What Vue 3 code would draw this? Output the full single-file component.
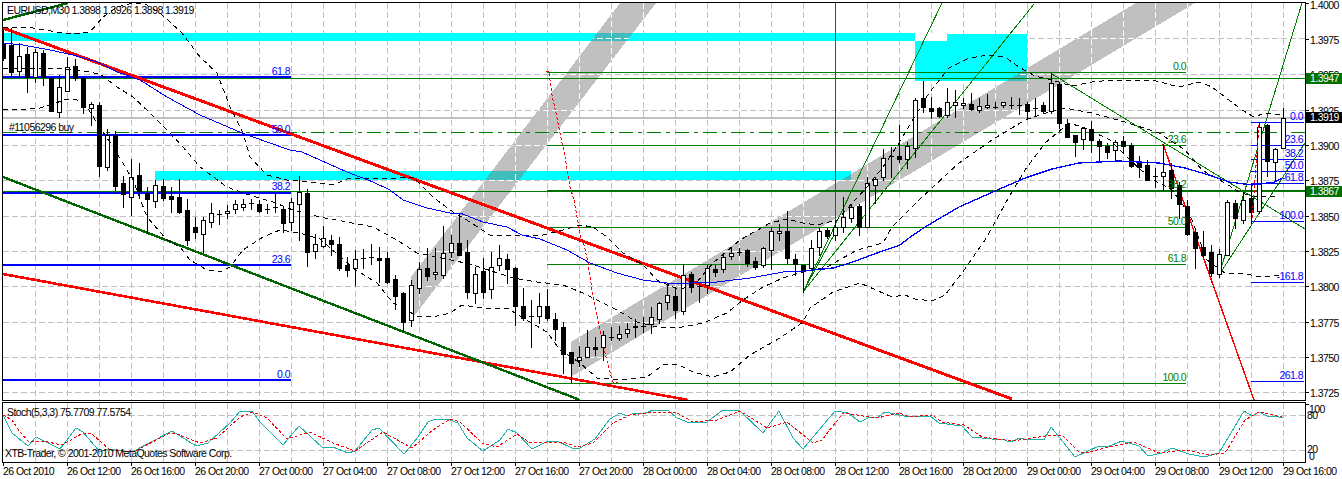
<template>
  <div class="terminal">
    <svg class="chart" width="1342" height="479" viewBox="0 0 1342 479">
      <defs>
        <clipPath id="main-clip"><rect x="3" y="3" width="1302" height="397" /></clipPath>
        <clipPath id="band-clip">
          <polygon v-for="b in bands" :key="b" :points="b" />
        </clipPath>
        <clipPath id="cyan-clip">
          <rect v-for="r in cyanRects" :key="r.x" :x="r.x" :y="r.y" :width="r.w" :height="r.h" />
        </clipPath>
      </defs>

      <!-- grid -->
      <line v-for="y in gridY" :key="'gy' + y" class="grid" x1="3" x2="1305" :y1="y" :y2="y" />
      <line v-for="y in [415.5, 450.5]" :key="'sy' + y" class="grid" x1="3" x2="1305" :y1="y" :y2="y" />
      <line v-for="x in gridX" :key="'gx' + x" class="grid" :x1="x" :x2="x" y1="3" y2="400" />
      <line v-for="x in gridX" :key="'sx' + x" class="grid" :x1="x" :x2="x" y1="403" y2="462" />

      <g clip-path="url(#main-clip)">
        <!-- objects behind the bars -->
        <polygon v-for="b in bands" :key="b" class="band" :points="b" />
        <rect v-for="r in cyanRects" :key="r.x" class="cyan" :x="r.x" :y="r.y" :width="r.w" :height="r.h" />
        <rect class="blank" x="915" y="33" width="32" height="8" />
        <g clip-path="url(#cyan-clip)">
          <polygon v-for="b in bands" :key="b" class="teal" :points="b" />
        </g>
        <g clip-path="url(#band-clip)">
          <line v-for="x in gridX" :key="x" class="grid-xor" :x1="x" :x2="x" y1="3" y2="400" />
          <line v-for="y in gridY" :key="y" class="grid-xor" x1="3" x2="1305" :y1="y" :y2="y" />
        </g>

        <line class="grey-line" x1="3" x2="1305" y1="118" y2="118" />
        <line class="order" x1="3" x2="1305" y1="132.5" y2="132.5" />
        <line class="green" x1="3" x2="1305" y1="78.5" y2="78.5" />
        <line class="green" x1="3" x2="547" y1="191.5" y2="191.5" />
        <line class="green" x1="835.5" x2="835.5" y1="3" y2="233" />
        <line v-for="y in greenFib" :key="y" class="green" x1="547" x2="1186" :y1="y" :y2="y" />
        <line class="green-thick" x1="547" x2="1305" y1="191" y2="191" />

        <line v-for="y in blueFibLeft" :key="y" class="blue-fib" x1="3" x2="291" :y1="y" :y2="y" />
        <line v-for="y in blueFibRight" :key="y" class="blue-thin" x1="1251" x2="1304" :y1="y" :y2="y" />

        <line class="red-thick" x1="3" y1="28" x2="1012" y2="399" />
        <line class="red-mid" x1="3" y1="274" x2="688" y2="400" />
        <line class="dark-green" x1="3" y1="20" x2="68" y2="3" />
        <line class="dark-green" x1="3" y1="177" x2="580" y2="400" />
        <line class="red-thin" x1="1163" y1="144" x2="1254" y2="400" />
        <polyline class="red-dash" :points="redCurve" />

        <line v-for="(l, i) in fanLines" :key="i" class="fan" :x1="l[0]" :y1="l[1]" :x2="l[2]" :y2="l[3]" />

        <!-- bars -->
        <g v-for="c in candles" :key="c.x">
          <line class="wick" :x1="c.x + 0.5" :x2="c.x + 0.5" :y1="c.hi" :y2="c.lo" />
          <line v-if="c.doji" class="wick" :x1="c.x - 2" :x2="c.x + 3" :y1="c.top + 0.5" :y2="c.top + 0.5" />
          <rect v-else :class="c.up ? 'body-up' : 'body-down'" :x="c.x - 1.5" :y="c.top + 0.5" width="4" :height="c.bot - c.top" />
        </g>

        <!-- indicators -->
        <polyline class="band-line" :points="bollUpper" />
        <polyline class="band-line" :points="bollMid" />
        <polyline class="band-line" :points="bollLower" />
        <polyline class="ma" :points="maLeft" />
        <polyline class="ma ma-right" :points="maRight" />
        <line class="red-dash" x1="1259" y1="125" x2="1252" y2="220" />
      </g>

      <!-- frame -->
      <path class="frame" d="M2.5 2.5H1305.5V400.5H2.5Z" />
      <path class="frame" d="M2.5 402.5H1305.5V462.5H2.5Z" />
      <line v-for="t in timeLabels" :key="'t' + t.x" class="tick" :x1="t.x + 0.5" :x2="t.x + 0.5" y1="462" y2="466" />
      <line v-for="p in priceLabels" :key="'p' + p.text" class="tick" x1="1305" x2="1309" :y1="p.y" :y2="p.y" />
      <line class="tick" x1="1305" x2="1309" y1="404.5" y2="404.5" />

      <!-- stochastic -->
      <polyline class="stoch-main" :points="stochMain" />
      <polyline class="stoch-signal" :points="stochSignal" />

      <!-- labels -->
      <text class="label" x="7" y="14">EURUSD,M30  1.3898 1.3926 1.3898 1.3919</text>
      <text class="label" x="9" y="130.5">#11056296 buy</text>
      <text class="label" x="7" y="416">Stoch(5,3,3) 75.7709 77.5754</text>
      <text class="label" x="5" y="457">XTB-Trader, © 2001-2010 MetaQuotes Software Corp.</text>

      <text v-for="f in fibBlue" :key="'b' + f.x + f.y" class="label fib-blue" :x="f.x" :y="f.y">{{ f.text }}</text>
      <text v-for="f in fibGreen" :key="'g' + f.y" class="label fib-green" x="1186" :y="f.y">{{ f.text }}</text>

      <text v-for="p in priceLabels" :key="p.text" class="label" x="1310" :y="p.textY">{{ p.text }}</text>
      <template v-for="m in priceMarks" :key="m.text">
        <rect :class="m.cls" x="1306" :y="m.y - 5" width="36" height="10.5" />
        <text class="label mark-text" x="1310" :y="m.y + 4">{{ m.text }}</text>
      </template>
      <text v-for="s in stochScale" :key="s.text" class="label" :x="s.x" :y="s.y">{{ s.text }}</text>
      <text v-for="t in timeLabels" :key="t.x" class="label" :x="t.x" y="475">{{ t.text }}</text>
    </svg>
  </div>
</template>

<script setup>
const gridY = [38.5, 74.5, 110.5, 145.5, 180.5, 216.5, 251.5, 286.5, 322.5, 357.5, 392.5]
const gridX = []
for (let x = 35.5; x < 1305; x += 32) gridX.push(x)

const bands = [
  '411,277 620,3 656,3 411,320',
  '571,342 1136,3 1195,3 571,377'
]
const cyanRects = [
  { x: 3, y: 33, w: 944, h: 8 },
  { x: 915, y: 34, w: 112, h: 47 },
  { x: 155, y: 171, w: 696, h: 9 }
]

const greenFib = [72.5, 145.5, 227.5, 264.5, 383.5]
const blueFibLeft = [77, 135, 192.5, 265, 380]
const blueFibRight = [122.5, 145.5, 159.5, 171.5, 183.5, 221.5, 282.5, 381.5]

const fanLines = [
  [803, 292, 942, 3],
  [803, 292, 835, 233],
  [803, 292, 1034, 4],
  [1052, 74, 1305, 229],
  [1219, 275, 1302, 3],
  [1219, 275, 1305, 143]
]

const redCurve = '546,71 549,71 549,72 552,95 557,118 560,133 565,157 570,187 574,200 578,222 581,240 583,240 588,263 593,297 598,320 605,353 612,380 613,382 618,382'

// hi, body top, body bottom, lo, 1 = up bar
const bars = [
  [30,43,58,60,0],[28,45,72,75,0],[43,56,71,75,1],[47,54,77,92,0],[49,52,77,82,1],[50,53,77,85,0],[77,78,111,111,0],[75,87,112,117,1],
  [57,67,91,91,1],[59,66,78,80,0],[77,78,107,113,0],[102,104,108,125,1],[102,105,166,176,0],[129,135,167,170,1],[131,135,186,190,0],[176,183,194,207,0],
  [159,177,197,215,1],[163,175,191,197,0],[187,193,199,233,0],[180,185,201,207,1],[179,186,198,200,0],[187,196,199,212,0],[179,197,212,213,0],[199,210,240,245,0],
  [217,227,232,238,0],[217,220,234,252,1],[203,213,222,227,1],[210,214,214,224,1],[205,211,213,218,1],[200,204,209,213,1],[199,204,207,210,1],[199,203,203,209,1],
  [200,204,211,212,0],[204,209,209,213,1],[193,207,207,212,1],[207,209,223,232,0],[198,202,222,230,1],[176,192,204,240,1],[189,193,252,266,0],[234,244,251,258,1],
  [226,238,246,247,1],[235,240,244,255,0],[237,244,268,270,0],[257,265,270,276,0],[250,259,268,285,1],[249,258,258,268,1],[244,257,257,264,1],[247,258,260,282,0],
  [252,258,282,283,0],[275,279,296,309,0],[292,293,322,330,0],[280,285,320,326,1],[262,269,288,293,1],[248,268,276,280,0],[248,272,274,279,1],[226,253,275,278,1],
  [235,243,252,257,1],[213,243,255,255,0],[240,252,292,298,0],[267,274,293,303,1],[258,271,292,298,0],[252,267,289,298,1],[245,258,265,270,1],[254,259,269,283,0],
  [267,268,306,325,0],[288,306,318,320,0],[300,316,316,347,1],[293,306,316,323,1],[289,306,318,320,0],[313,319,329,340,0],[322,327,354,373,0],[352,352,363,382,0],
  [346,357,360,366,1],[330,347,357,357,1],[337,347,349,355,0],[331,335,347,360,1],[327,337,337,340,1],[326,334,338,340,1],[323,329,333,337,1],[319,326,327,337,1],
  [317,326,326,332,1],[307,317,324,333,1],[302,303,319,323,1],[283,295,302,309,1],[287,296,310,318,0],[264,275,311,314,1],[272,274,287,292,0],[283,286,286,302,1],
  [265,268,285,293,1],[265,269,272,276,0],[253,257,269,272,1],[247,253,256,259,1],[248,252,252,255,1],[249,250,263,266,0],[257,261,267,269,0],[247,248,265,267,1],
  [227,231,250,269,1],[224,231,233,240,1],[211,231,258,263,0],[254,259,264,275,0],[265,265,270,292,0],[240,248,268,270,1],[228,231,247,255,1],[228,230,236,238,0],
  [220,227,235,240,1],[197,217,227,232,1],[204,207,218,222,1],[204,206,227,235,0],[177,183,227,227,1],[177,179,185,203,1],[149,158,177,180,1],[147,156,156,177,1],
  [125,156,159,162,0],[142,146,159,168,1],[98,100,148,157,1],[81,98,107,112,0],[97,108,111,118,0],[107,108,116,117,0],[88,102,115,117,1],[90,102,105,117,1],
  [98,103,105,108,1],[93,104,109,110,0],[98,106,110,112,1],[94,105,107,108,1],[102,107,107,108,1],[102,102,105,107,1],[97,105,105,108,1],[98,105,105,114,1],
  [102,104,111,118,0],[98,108,108,116,1],[102,105,111,113,0],[73,83,111,113,1],[83,84,123,128,0],[119,124,137,137,0],[135,135,142,156,0],[127,128,139,149,1],
  [121,129,140,152,0],[139,141,146,160,0],[143,146,152,158,0],[140,142,150,161,1],[136,141,146,152,0],[143,145,166,167,0],[156,163,167,177,0],[160,165,180,180,0],
  [168,176,176,187,1],[144,172,176,190,1],[163,170,188,198,0],[182,185,204,218,0],[200,206,234,235,0],[230,232,248,268,0],[231,247,255,257,0],[245,252,273,276,0],
  [249,254,274,277,1],[200,202,255,255,1],[200,203,218,228,0],[192,200,220,223,1],[185,198,212,223,0],[123,127,211,213,1],[124,125,161,176,0],[148,149,162,180,1],
  [108,118,148,148,1]
]
const candles = bars.map((b, i) => ({
  x: 3 + 8 * i, hi: b[0], top: b[1], bot: b[2], lo: b[3] + 1, up: b[4] === 1, doji: b[1] === b[2]
}))

const bollUpper = '3,27 33,28 57,32 73,34 90,32 103,17 117,7 133,3 145,4 160,13 182,33 200,57 217,73 230,107 243,133 250,157 267,175 287,180 320,183 333,185 347,179 367,178 397,178 413,177 433,197 450,210 470,222 490,235 527,235 543,235 563,230 580,225 593,227 607,237 623,253 643,265 657,280 680,290 697,282 713,263 740,240 770,223 787,219 803,223 817,225 837,220 867,187 883,167 899,143 929,93 949,68 969,58 989,55 1005,57 1019,67 1035,76 1052,80 1072,86 1092,82 1112,80 1152,80 1179,87 1199,82 1212,87 1225,97 1242,110 1254,117 1265,113 1280,115'
const bollMid = '3,68 30,68 57,68 83,71 100,74 117,87 133,97 150,113 167,130 183,147 200,167 227,187 243,193 273,202 293,210 320,217 347,222 373,227 397,240 417,253 427,255 470,264 513,278 537,282 563,285 583,293 617,310 637,322 657,327 677,328 703,323 727,313 743,300 763,287 783,278 803,272 827,267 857,250 883,243 892,227 919,200 959,163 992,140 1025,120 1049,112 1065,108 1092,113 1125,122 1159,133 1185,150 1202,170 1225,183 1239,192 1255,197 1279,196'
const bollLower = '3,109 20,110 40,108 50,105 67,99 77,100 87,107 97,123 115,150 133,180 147,217 167,240 180,247 190,260 207,270 220,272 230,267 243,250 263,237 280,230 300,233 320,239 353,268 377,283 393,303 417,316 433,317 450,313 462,305 483,308 507,308 523,318 547,332 560,350 580,363 597,378 623,380 647,377 663,365 677,364 693,372 713,377 730,372 750,355 780,338 803,322 810,308 833,292 860,283 892,297 905,295 915,299 932,301 945,295 962,273 985,240 1009,197 1025,170 1045,143 1069,123 1085,128 1110,140 1130,160 1150,178 1172,190 1190,215 1207,260 1225,273 1245,274 1262,277 1279,275'
const maLeft = '3,43 23,45 50,50 73,55 97,62 117,72 140,80 167,97 200,115 242,133 267,142 290,150 302,152 320,160 347,172 373,182 390,190 403,200 427,208 450,213 460,213 483,222 507,227 522,235 540,239 567,250 590,263 617,273 643,280 667,283 690,283 717,282 750,278 767,275 783,272 803,271'
const maRight = '803,271 833,268 850,263 877,253 900,245 909,238 925,227 959,207 1002,188 1025,178 1052,169 1079,163 1119,161 1159,163 1185,168 1209,175 1229,182 1252,185 1275,182 1282,178'

const stochMain = '3,415 12,433 28,446 36,437 60,449 76,428 83,432 100,452 107,449 132,452 172,431 196,446 208,443 230,423 240,411 252,411 260,422 283,445 299,426 323,448 333,447 348,453 355,451 372,430 379,428 404,454 418,437 428,422 435,419 450,420 458,423 467,438 483,451 500,440 508,429 517,433 532,449 548,441 557,441 572,448 580,448 595,439 610,419 620,413 627,416 635,413 643,414 653,410 668,410 677,418 690,423 707,422 723,410 740,411 763,433 779,411 793,438 803,449 835,411 848,413 860,422 870,417 877,418 885,412 909,417 930,416 939,423 962,426 972,437 992,439 1002,439 1010,442 1020,438 1027,440 1035,439 1044,440 1051,427 1075,457 1099,446 1107,447 1122,441 1139,446 1148,456 1162,453 1172,448 1189,454 1204,457 1219,453 1244,411 1252,416 1259,412 1267,416 1275,416 1283,418'
const stochSignal = '3,415 12,420 20,432 28,441 43,441 62,445 83,433 92,434 110,450 133,452 170,433 177,434 200,443 217,438 240,417 253,412 267,418 287,439 310,432 333,443 355,451 383,432 412,448 433,430 450,419 460,422 482,443 497,447 517,434 530,443 563,442 577,447 593,443 613,423 630,415 657,412 677,413 693,422 717,420 740,411 767,428 787,422 813,443 822,440 843,413 877,418 900,413 909,417 932,415 942,422 964,425 982,437 1005,440 1019,440 1052,435 1062,435 1080,453 1089,452 1109,447 1134,442 1159,453 1185,450 1209,455 1225,453 1245,420 1259,412 1282,417'

const fibBlue = [
  { x: 290, y: 75, text: '61.8' }, { x: 290, y: 133, text: '50.0' }, { x: 290, y: 190, text: '38.2' },
  { x: 290, y: 263, text: '23.6' }, { x: 290, y: 378, text: '0.0' },
  { x: 1303, y: 120, text: '0.0' }, { x: 1303, y: 143, text: '23.6' }, { x: 1303, y: 157, text: '38.2' },
  { x: 1303, y: 169, text: '50.0' }, { x: 1303, y: 181, text: '-61.8' }, { x: 1303, y: 219, text: '100.0' },
  { x: 1303, y: 280, text: '-161.8' }, { x: 1303, y: 379, text: '261.8' }
]
const fibGreen = [
  { y: 70, text: '0.0' }, { y: 143, text: '23.6' }, { y: 188, text: '38.2' },
  { y: 225, text: '50.0' }, { y: 262, text: '61.8' }, { y: 381, text: '100.0' }
]

const priceLabels = [
  ['1.4000', 3.5], ['1.3975', 39.5], ['1.3950', 74.5], ['1.3925', 110.5], ['1.3900', 145.5], ['1.3875', 180.5],
  ['1.3850', 216.5], ['1.3825', 251.5], ['1.3800', 286.5], ['1.3775', 322.5], ['1.3750', 357.5], ['1.3725', 392.5]
].map(([text, y]) => ({ text, y, textY: Math.max(y + 4, 9) }))

const priceMarks = [
  { text: '1.3947', y: 78, cls: 'mark-green' },
  { text: '1.3919', y: 117, cls: 'mark-black' },
  { text: '1.3867', y: 191, cls: 'mark-green' }
]

const stochScale = [
  { x: 1309, y: 413, text: '100' }, { x: 1307, y: 419, text: '80' },
  { x: 1307, y: 453, text: '20' }, { x: 1309, y: 460, text: '0' }
]

// one label every 4 hours, 64px apart
const timeLabels = [{ x: 3, text: '26 Oct 2010' }]
let day = 26
let hour = 12
for (let x = 67; x <= 1283; x += 64) {
  timeLabels.push({ x, text: `${day} Oct ${String(hour).padStart(2, '0')}:00` })
  hour += 4
  if (hour === 24) {
    hour = 0
    day++
  }
}
</script>

<style scoped>
.terminal {
  width: 1342px;
  height: 479px;
  background: #ffffff;
  overflow: hidden;
}

.chart {
  display: block;
  shape-rendering: crispEdges;
}

.grid {
  stroke: #c0c0c0;
  stroke-width: 1;
  stroke-dasharray: 6 3;
}

.grid-xor {
  stroke: #ffffff;
  stroke-width: 1;
  stroke-dasharray: 6 3;
}

.band { fill: #c0c0c0; }
.cyan { fill: #00ffff; }
.blank { fill: #ffffff; }
.teal { fill: #40bcbc; }

.grey-line { stroke: #c0c0c0; stroke-width: 1.5; }
.order { stroke: #008000; stroke-width: 1; stroke-dasharray: 14 5 4 5; }
.green { stroke: #008000; stroke-width: 1; }
.green-thick { stroke: #007000; stroke-width: 2; }
.blue-fib { stroke: #0000ff; stroke-width: 2; }
.blue-thin { stroke: #0000ff; stroke-width: 1; }
.red-thick { stroke: #ff0000; stroke-width: 3; }
.red-mid { stroke: #ff0000; stroke-width: 2.6; }
.red-thin { stroke: #ff0000; stroke-width: 1.4; }
.dark-green { stroke: #006400; stroke-width: 2.4; }
.fan { stroke: #008000; stroke-width: 1; }

.red-dash {
  fill: none;
  stroke: #ff0000;
  stroke-width: 1;
  stroke-dasharray: 3 2;
}

.wick { stroke: #000000; stroke-width: 1; }
.body-up { fill: #ffffff; stroke: #000000; stroke-width: 1; }
.body-down { fill: #000000; stroke: #000000; stroke-width: 1; }

.band-line {
  fill: none;
  stroke: #000000;
  stroke-width: 1;
  stroke-dasharray: 5 4;
}

.ma { fill: none; stroke: #0000ff; stroke-width: 1; }
.ma-right { stroke-width: 1.3; }
.frame { fill: none; stroke: #000000; stroke-width: 1; }
.tick { stroke: #000000; stroke-width: 1; }

.stoch-main { fill: none; stroke: #20b2aa; stroke-width: 1; }

.stoch-signal {
  fill: none;
  stroke: #ff0000;
  stroke-width: 1;
  stroke-dasharray: 3 2;
}

.label {
  font-family: "Liberation Sans", Arial, sans-serif;
  font-size: 10.5px;
  letter-spacing: -0.55px;
  fill: #000000;
  white-space: pre;
}

.fib-blue { fill: #0000ff; text-anchor: end; }
.fib-green { fill: #008000; text-anchor: end; }
.mark-text { fill: #ffffff; }
.mark-green { fill: #007000; }
.mark-black { fill: #000000; }
</style>
